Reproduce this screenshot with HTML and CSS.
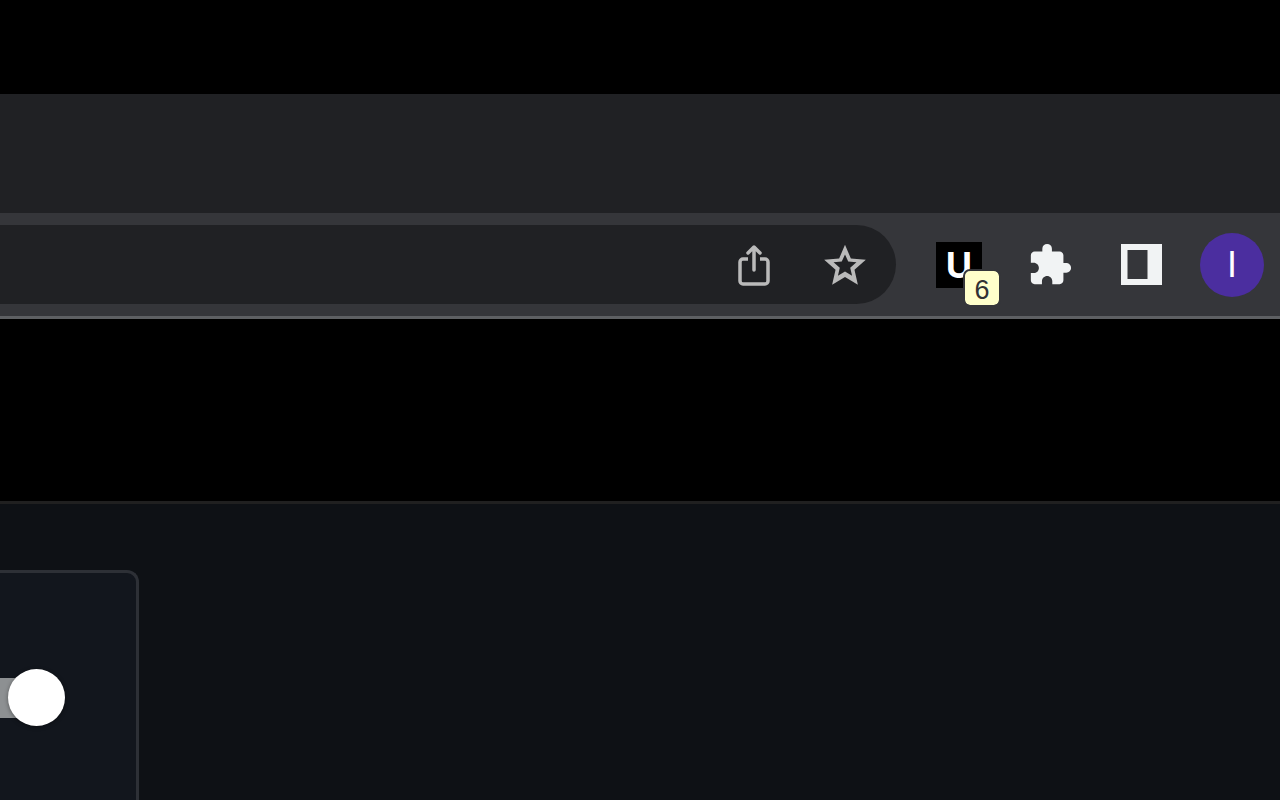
FILE: index.html
```html
<!DOCTYPE html>
<html lang="en">
<head>
  <meta charset="UTF-8" />
  <meta name="viewport" content="width=device-width, initial-scale=1" />
  <title>Browser toolbar</title>
  <link rel="stylesheet" href="styles.css">
</head>
<body>

<div class="tab-strip"></div>

<header class="toolbar">
  <div class="address-bar">
    <input type="text" class="address" aria-label="Address" />
    <button type="button" class="tool share" aria-label="Share">
      <svg width="36" height="44" viewBox="0 0 36 44" fill="none" stroke="currentColor" stroke-width="3.500" stroke-linejoin="round" stroke-linecap="round">
        <path d="M12 16H7a3 3 0 0 0-3 3V38a3 3 0 0 0 3 3h22a3 3 0 0 0 3-3V19a3 3 0 0 0-3-3h-5" stroke-linecap="butt" />
        <path d="M18 27V5M12 10l6-6 6 6" />
      </svg>
    </button>
    <button type="button" class="tool star" aria-label="Bookmark">
      <svg width="50" height="50" viewBox="0 0 24 24" fill="currentColor">
        <path d="M22 9.500l-7.190-.62L12 2.260 9.190 8.880 2 9.500l5.460 4.730L5.820 21.500 12 17.700 18.180 21.500l-1.630-7.270L22 9.500zM12 15.100l-3.400 2.100 .9-3.900-3-2.600 3.950-.35L12 6.900l1.550 3.450 3.950.35-3 2.600.9 3.900L12 15.100z" />
      </svg>
    </button>
  </div>
  <button type="button" class="tool" aria-label="Extension, 6 items">
    <span class="extension">U<span class="badge">6</span></span>
  </button>
  <button type="button" class="tool" aria-label="Extensions">
    <svg width="46" height="46" viewBox="0 0 24 24" fill="currentColor">
      <path d="M20.500 11H19V7c0-1.100-.9-2-2-2h-4V3.500a2.500 2.500 0 0 0-5 0V5H4c-1.100 0-1.990.9-1.990 2v3.800H3.500c1.490 0 2.700 1.210 2.700 2.700s-1.210 2.700-2.700 2.700H2V20c0 1.100.9 2 2 2h3.800v-1.500c0-1.490 1.210-2.700 2.700-2.700s2.700 1.210 2.700 2.700V22H17c1.100 0 2-.9 2-2v-4h1.500a2.500 2.500 0 0 0 0-5z" />
    </svg>
  </button>
  <button type="button" class="tool" aria-label="Side panel">
    <svg width="41" height="41" viewBox="0 0 41 41" fill="currentColor">
      <path fill-rule="evenodd" d="M0 0h41v41H0zM6.500 6v29H26.500V6z" />
    </svg>
  </button>
  <button type="button" class="tool avatar" aria-label="Profile">I</button>
</header>

<div class="page-header"></div>

<main class="content">
  <section class="card">
    <input type="checkbox" class="switch" aria-label="Enable" checked />
  </section>
</main>

</body>
</html>
```
FILE: styles.css
```css
* {
  box-sizing: border-box;
}
body {
  display: flex;
  flex-direction: column;
  min-height: 100vh;
  margin: 0;
  padding-top: 94px;
  background: #000;
  font-family: "Liberation Sans", Arial, sans-serif;
}

/* Browser window */
.tab-strip {
  height: 119px;
  background: #202124;
}
.toolbar {
  display: flex;
  align-items: center;
  gap: 27px;
  padding: 12px 16px;
  background: #35363a;
  border-bottom: 3px solid #5e6063;
}
.address-bar {
  display: flex;
  flex: 1;
  align-items: center;
  gap: 27px;
  height: 79px;
  margin-left: -16px;
  margin-right: 4px;
  padding-right: 19px;
  background: #202124;
  border-radius: 0 40px 40px 0;
}
.address {
  flex: 1;
  min-width: 0;
  height: 100%;
  padding: 0 16px;
  border: none;
  outline: none;
  background: transparent;
  color: #e8eaed;
  font: inherit;
  font-size: 27px;
}
.tool {
  display: flex;
  flex-shrink: 0;
  align-items: center;
  justify-content: center;
  width: 64px;
  height: 64px;
  padding: 0;
  border: none;
  border-radius: 50%;
  background: none;
  color: #f1f3f4;
  font: inherit;
  cursor: pointer;
}
.share,
.star {
  color: #bababa;
}
.extension {
  position: relative;
  width: 46px;
  height: 46px;
  background: #000;
  color: #fff;
  font-family: Inter, sans-serif;
  font-size: 36px;
  font-weight: 700;
  line-height: 46px;
  text-align: center;
}
.badge {
  position: absolute;
  right: -19px;
  bottom: -19px;
  width: 38px;
  height: 38px;
  border: 2px solid #35363a;
  border-radius: 7px;
  background: #ffffcb;
  background-clip: padding-box;
  color: #303134;
  font-family: "Liberation Sans", Arial, sans-serif;
  font-size: 27px;
  font-weight: 400;
  line-height: 38px;
}
.avatar {
  background: #4b2e9f;
  color: #fff;
  font-size: 36px;
}

/* Page */
.page-header {
  height: 185px;
  border-bottom: 3px solid #202020;
}
.content {
  display: flex;
  flex: 1;
  align-items: stretch;
  padding-top: 66px;
  background: #0e1115;
}
.card {
  padding: 96px 71px 0 0;
  background: #12161d;
  border: 3px solid #2d3036;
  border-width: 3px 3px 0 0;
  border-radius: 0 12px 0 0;
}
.switch {
  appearance: none;
  display: grid;
  align-items: center;
  width: 65px;
  height: 57px;
  margin: 0;
  cursor: pointer;
}
.switch::before,
.switch::after {
  content: "";
  grid-area: 1 / 1;
}
.switch::before {
  width: 46px;
  height: 40px;
  background: #8d9092;
}
.switch::after {
  justify-self: end;
  width: 57px;
  height: 57px;
  border-radius: 50%;
  background: #fff;
  box-shadow: 0 1px 4px rgba(0, 0, 0, 0.4);
}
```
